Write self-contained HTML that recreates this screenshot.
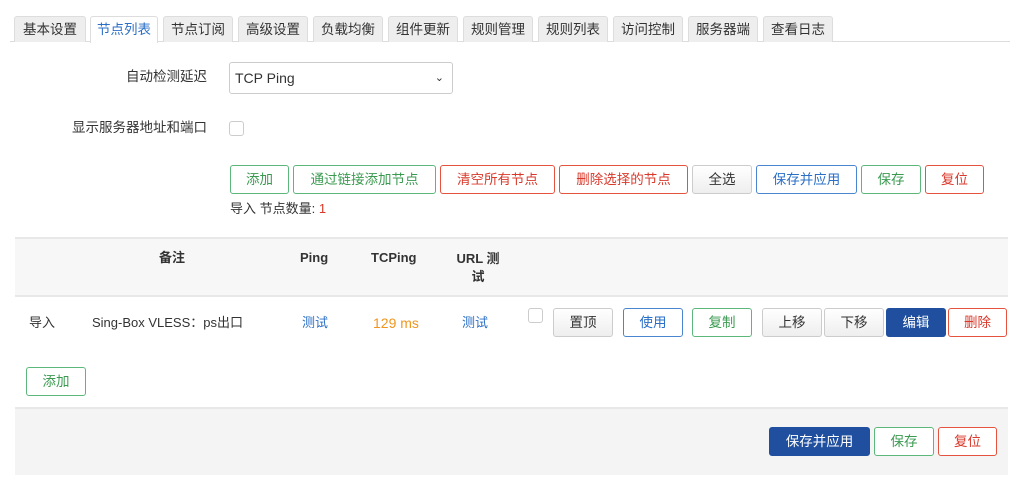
<!DOCTYPE html>
<html><head><meta charset="utf-8"><style>
*{box-sizing:border-box}
body{margin:0;width:1024px;height:487px;background:#fff;font-family:"Liberation Sans","Noto Sans CJK SC",sans-serif;font-size:13px;color:#333;position:relative;overflow:hidden}
.a{position:absolute;line-height:16px}
.tab{position:absolute;top:16px;height:26px;background:#eee;border:1px solid #ddd;border-bottom:none;border-radius:3px 3px 0 0;text-align:center;line-height:25px;font-size:13.5px;color:#333}
.tab.on{background:#fff;color:#2b6fc7;height:27px}
.b{position:absolute;height:29px;border:1px solid #ccc;border-radius:3px;background:#fff;text-align:center;line-height:27px;font-size:13.5px;color:#333}
.g{border-color:#5cb87a;color:#3a9a50}
.r{border-color:#e5533f;color:#d9382a}
.bl{border-color:#4a85d0;color:#2b6fc7}
.p{background:#1f4f9e;border-color:#1f4f9e;color:#fff}
.d{background:linear-gradient(#fff,#eee)}
</style></head><body>
<div class="a" style="left:10px;top:41px;width:1000px;height:1px;background:#ddd"></div>
<div class="tab" style="left:14px;width:72px">基本设置</div>
<div class="tab on" style="left:90px;width:68px">节点列表</div>
<div class="tab" style="left:163px;width:70px">节点订阅</div>
<div class="tab" style="left:238px;width:70px">高级设置</div>
<div class="tab" style="left:313px;width:70px">负载均衡</div>
<div class="tab" style="left:388px;width:70px">组件更新</div>
<div class="tab" style="left:463px;width:70px">规则管理</div>
<div class="tab" style="left:538px;width:70px">规则列表</div>
<div class="tab" style="left:613px;width:70px">访问控制</div>
<div class="tab" style="left:688px;width:70px">服务器端</div>
<div class="tab" style="left:763px;width:70px">查看日志</div>

<div class="a" style="left:0;width:207px;top:69px;text-align:right;font-size:13.5px">自动检测延迟</div>
<div class="a" style="left:229px;top:62px;width:224px;height:32px;border:1px solid #ccc;border-radius:3px;line-height:30px;padding-left:5px;font-size:14px">TCP Ping<span style="position:absolute;right:8px;top:0;font-size:11px">&#8964;</span></div>
<div class="a" style="left:0;width:207px;top:120px;text-align:right;font-size:13.5px">显示服务器地址和端口</div>
<div class="a" style="left:229px;top:121px;width:15px;height:15px;border:1px solid #ccc;border-radius:3px"></div>

<div class="b g" style="left:230px;top:165px;width:59px">添加</div>
<div class="b g" style="left:293px;top:165px;width:143px">通过链接添加节点</div>
<div class="b r" style="left:440px;top:165px;width:115px">清空所有节点</div>
<div class="b r" style="left:559px;top:165px;width:129px">删除选择的节点</div>
<div class="b d" style="left:692px;top:165px;width:60px">全选</div>
<div class="b bl" style="left:756px;top:165px;width:101px">保存并应用</div>
<div class="b g" style="left:861px;top:165px;width:60px">保存</div>
<div class="b r" style="left:925px;top:165px;width:59px">复位</div>
<div class="a" style="left:230px;top:201px;font-size:13px">导入 节点数量: <span style="color:#d9382a">1</span></div>

<div class="a" style="left:15px;top:237px;width:993px;height:60px;background:#f7f7f7;border-top:2px solid #e8e8e8;border-bottom:2px solid #e8e8e8"></div>
<div class="a" style="left:159px;top:250px;font-weight:bold">备注</div>
<div class="a" style="left:300px;top:250px;font-weight:bold">Ping</div>
<div class="a" style="left:371px;top:250px;font-weight:bold">TCPing</div>
<div class="a" style="left:453px;top:250px;font-weight:bold;width:50px;text-align:center;line-height:18px">URL 测<br>试</div>

<div class="a" style="left:29px;top:315px">导入</div>
<div class="a" style="left:92px;top:315px">Sing-Box VLESS：ps出口</div>
<div class="a" style="left:302px;top:315px;color:#2b6fc7">测试</div>
<div class="a" style="left:373px;top:315px;color:#f0961e;font-size:14px">129 ms</div>
<div class="a" style="left:462px;top:315px;color:#2b6fc7">测试</div>
<div class="a" style="left:528px;top:308px;width:15px;height:15px;border:1px solid #ccc;border-radius:3px"></div>
<div class="b d" style="left:553px;top:308px;width:60px">置顶</div>
<div class="b bl" style="left:623px;top:308px;width:60px">使用</div>
<div class="b g" style="left:692px;top:308px;width:60px">复制</div>
<div class="b d" style="left:762px;top:308px;width:60px">上移</div>
<div class="b d" style="left:824px;top:308px;width:60px">下移</div>
<div class="b p" style="left:886px;top:308px;width:60px">编辑</div>
<div class="b r" style="left:948px;top:308px;width:59px">删除</div>

<div class="b g" style="left:26px;top:367px;width:60px">添加</div>

<div class="a" style="left:15px;top:407px;width:993px;height:68px;background:#f4f4f4;border-top:2px solid #e8e8e8"></div>
<div class="b p" style="left:769px;top:427px;width:101px">保存并应用</div>
<div class="b g" style="left:874px;top:427px;width:60px">保存</div>
<div class="b r" style="left:938px;top:427px;width:59px">复位</div>
</body></html>
